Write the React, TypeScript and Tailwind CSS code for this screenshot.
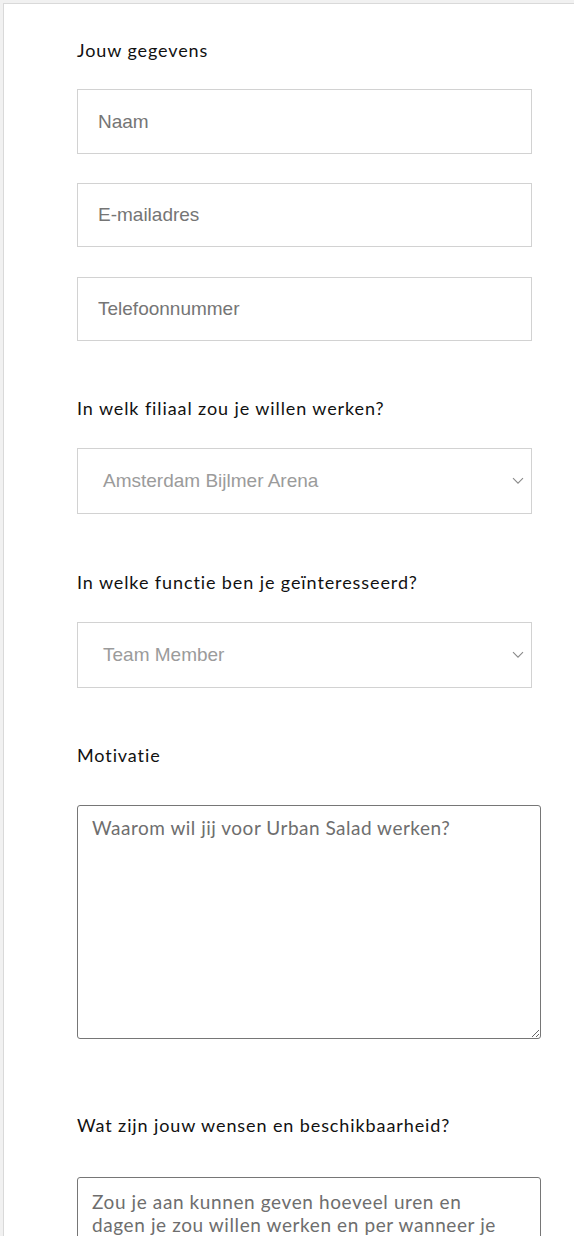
import React from "react";

const labelCls =
  "h-[24px] leading-[24px] text-[18px] tracking-[0.9px] text-[#111111] font-['Lato','Noto_Sans',sans-serif]";

function Chevron() {
  return (
    <svg width="12" height="8" viewBox="0 0 12 8" fill="none" className="shrink-0">
      <path d="M1 1.2 L6 6.2 L11 1.2" stroke="#8a8a8a" strokeWidth="1.1" />
    </svg>
  );
}

function TextInput({ placeholder, h, mt }: { placeholder: string; h: string; mt: string }) {
  return (
    <input
      type="text"
      placeholder={placeholder}
      className={`${mt} ${h} block w-[455px] border border-[#d2d2d2] bg-white pl-[20px] text-[19px] text-[#333] placeholder:text-[#757575] font-['Liberation_Sans',Arial,sans-serif] outline-none`}
    />
  );
}

function FakeSelect({ value, mt }: { value: string; mt: string }) {
  return (
    <div
      className={`${mt} flex h-[66px] w-[455px] items-center justify-between border border-[#d2d2d2] bg-white pl-[25px] pr-[7px]`}
    >
      <span className="text-[19px] text-[#9b9b9b] font-['Liberation_Sans',Arial,sans-serif]">
        {value}
      </span>
      <Chevron />
    </div>
  );
}

export default function App() {
  return (
    <div className="relative min-h-[1236px] overflow-hidden bg-[#f1f1f1] pl-[3px] pt-[3px]">
      <div className="min-h-[1233px] border-l border-t border-[#d9d9d9] bg-white pl-[73px] pt-[34px]">
        <div className={labelCls}>Jouw gegevens</div>
        <TextInput placeholder="Naam" h="h-[65px]" mt="mt-[27px]" />
        <TextInput placeholder="E-mailadres" h="h-[64px]" mt="mt-[29px]" />
        <TextInput placeholder="Telefoonnummer" h="h-[64px]" mt="mt-[30px]" />

        <div className={`${labelCls} mt-[55px]`}>In welk filiaal zou je willen werken?</div>
        <FakeSelect value="Amsterdam Bijlmer Arena" mt="mt-[28px]" />

        <div className={`${labelCls} mt-[56px]`}>In welke functie ben je geïnteresseerd?</div>
        <FakeSelect value="Team Member" mt="mt-[28px]" />

        <div className={`${labelCls} mt-[55px]`}>Motivatie</div>
        <textarea
          placeholder="Waarom wil jij voor Urban Salad werken?"
          className="mt-[38px] block h-[234px] w-[464px] rounded-[3px] border border-[#767676] bg-white px-[14px] pt-[10px] text-[19px] leading-[24px] tracking-[0.5px] text-[#333] placeholder:text-[#6e6e6e] font-['Lato','Noto_Sans',sans-serif] outline-none"
        />

        <div className={`${labelCls} mt-[74px]`}>Wat zijn jouw wensen en beschikbaarheid?</div>
        <textarea
          placeholder={
            "Zou je aan kunnen geven hoeveel uren en\ndagen je zou willen werken en per wanneer je\nbeschikbaar bent?"
          }
          className="mt-[40px] block h-[234px] w-[464px] rounded-[3px] border border-[#767676] bg-white px-[14px] pt-[12px] text-[19px] leading-[23px] tracking-[0.6px] text-[#333] placeholder:text-[#6e6e6e] font-['Lato','Noto_Sans',sans-serif] outline-none"
        />
      </div>
      <div className="pointer-events-none absolute bottom-0 left-0 right-0 h-[44px] bg-gradient-to-b from-white/0 to-[#efefef]" />
    </div>
  );
}
